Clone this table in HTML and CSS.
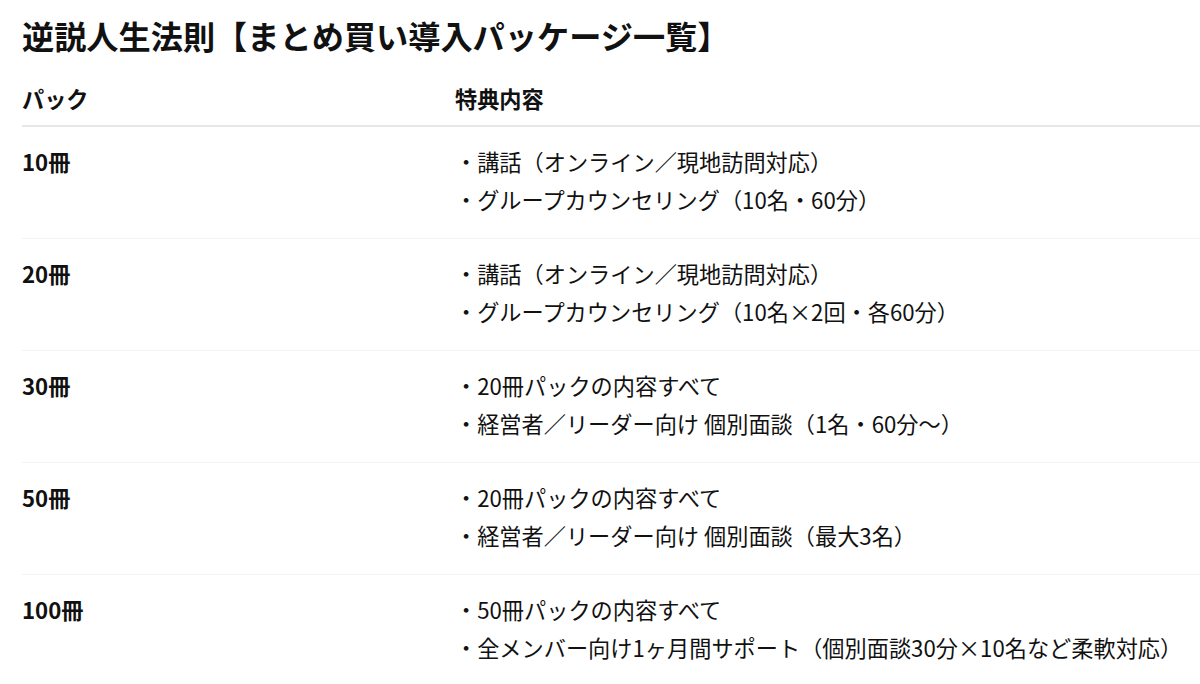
FILE: index.html
```html
<!DOCTYPE html>
<html lang="ja">
<head>
<meta charset="utf-8">
<title>逆説人生法則【まとめ買い導入パッケージ一覧】</title>
<link rel="stylesheet" href="styles.css">
</head>
<body>
<h1 class="title">逆説人生法則【まとめ買い導入パッケージ一覧】</h1>
<table class="packs">
  <thead>
    <tr>
      <th class="col-pack">パック</th>
      <th class="col-benefit">特典内容</th>
    </tr>
  </thead>
  <tbody>
    <tr>
      <td class="pack">10冊</td>
      <td class="benefit">・講話（オンライン／現地訪問対応）<br>・グループカウンセリング（10名・60分）</td>
    </tr>
    <tr>
      <td class="pack">20冊</td>
      <td class="benefit">・講話（オンライン／現地訪問対応）<br>・グループカウンセリング（10名×2回・各60分）</td>
    </tr>
    <tr>
      <td class="pack">30冊</td>
      <td class="benefit">・20冊パックの内容すべて<br>・経営者／リーダー向け 個別面談（1名・60分〜）</td>
    </tr>
    <tr>
      <td class="pack">50冊</td>
      <td class="benefit">・20冊パックの内容すべて<br>・経営者／リーダー向け 個別面談（最大3名）</td>
    </tr>
    <tr>
      <td class="pack">100冊</td>
      <td class="benefit">・50冊パックの内容すべて<br>・全メンバー向け1ヶ月間サポート（個別面談30分×10名など柔軟対応）</td>
    </tr>
  </tbody>
</table>
</body>
</html>
```

FILE: styles.css
```css
html, body {
  margin: 0;
  padding: 0;
  background: #ffffff;
}

body {
  padding: 16px 0 0 22px;
  color: #111111;
  font-family: "Noto Sans CJK JP", "Noto Sans", sans-serif;
  overflow: hidden;
}

.title {
  margin: 0 0 25px 0;
  font-size: 32.2px;
  line-height: 38px;
  font-weight: 700;
  white-space: nowrap;
}

.packs {
  width: 100%;
  border-collapse: collapse;
  font-size: 22.2px;
  line-height: 38px;
}

.packs th {
  text-align: left;
  font-weight: 700;
  padding: 0 0 8px 0;
  border-bottom: 2px solid #e6e6e6;
}

.col-pack {
  width: 433px;
}

.packs td {
  vertical-align: top;
  padding: 15px 0 20px 0;
  border-bottom: 1px solid #f2f2f2;
}

.packs tbody tr:last-child td {
  border-bottom: none;
}

.pack {
  font-weight: 700;
}

.benefit {
  font-weight: 400;
  white-space: nowrap;
}
```
